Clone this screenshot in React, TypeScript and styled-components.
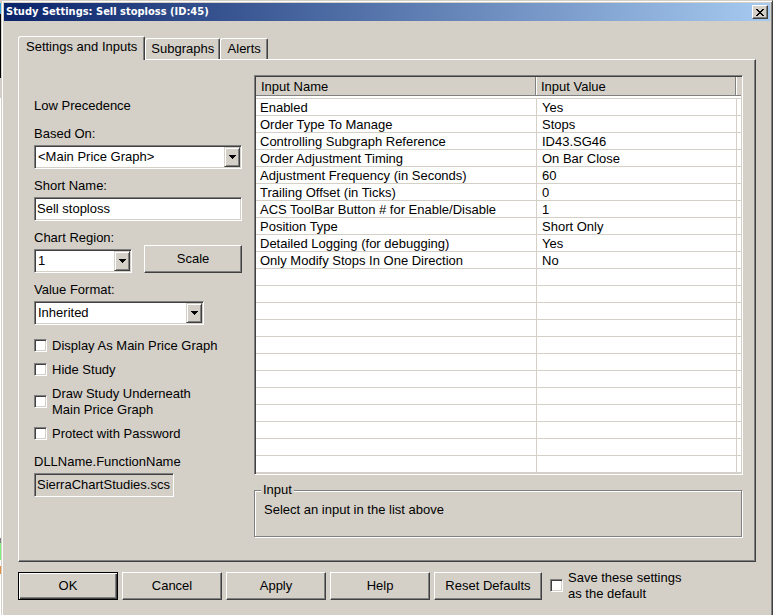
import React, { useId } from "react";
import styled, { createGlobalStyle, css } from "styled-components";

const face = "#d4d0c8";
const shadow = "#808080";
const dark = "#404040";

const GlobalStyle = createGlobalStyle`
  * { box-sizing: border-box; }
  html, body, #root { height: 100%; margin: 0; }
  body { background: #fff; overflow: hidden; }
  body, button, input, select { font: 13px/16px "Liberation Sans", Arial, sans-serif; color: #000; }
`;

const sunken = css`
  border: 1px solid;
  border-color: ${shadow} #fff #fff ${shadow};
  box-shadow: inset 1px 1px ${dark}, inset -1px -1px ${face};
`;

const Desktop = styled.div`
  min-height: 100%;
  display: flex;
  background: linear-gradient(#d4d0c8 0 3px, #2ba3e0 3px 14px, #000 14px 78px, #d4d0c8 78px 98px, #fff 98px 538px, #808080 538px 543px, #7cf47c 543px 560px, #fff 560px 566px, #e09040 566px 574px, #fff 574px);
`;

const Dialog = styled.main`
  flex: 1;
  margin-left: 1px;
  padding: 2px 2px 0;
  background: ${face};
  border: 1px solid;
  border-color: ${face} ${dark} ${face} ${face};
  border-bottom: 0;
  box-shadow: inset 1px 1px #fff, inset -1px 0 ${shadow};
`;

const TitleBar = styled.header`
  height: 18px;
  display: flex;
  align-items: center;
  justify-content: space-between;
  padding: 0 2px;
  background: linear-gradient(90deg, #0a246a, #a6caf0);
`;

const Title = styled.h1`
  margin: 0;
  color: #fff;
  font: bold 11px/16px "DejaVu Sans Condensed", Tahoma, sans-serif;
`;

const CloseButton = styled.button`
  width: 16px;
  height: 14px;
  padding: 0;
  display: grid;
  place-items: center;
  background: ${face};
  border: 1px solid;
  border-color: #fff ${dark} ${dark} #fff;
  box-shadow: inset -1px -1px ${shadow};
`;

const Body = styled.div`
  padding: 15px 14px 12px;
`;

const TabList = styled.div`
  display: flex;
  align-items: flex-end;
  height: 23px;
`;

const Tab = styled.button<{ $active?: boolean }>`
  position: relative;
  z-index: ${(p) => (p.$active ? 1 : 0)};
  height: ${(p) => (p.$active ? 24 : 21)}px;
  min-width: 48px;
  margin-bottom: ${(p) => (p.$active ? -1 : 0)}px;
  padding: ${(p) => (p.$active ? "0 7px 4px" : "0 5px")};
  background: ${face};
  border: 1px solid;
  border-width: 1px 1px 0;
  border-color: #fff ${dark} #fff #fff;
  border-radius: 3px 2px 0 0;
  box-shadow: inset -1px 0 ${shadow};
  white-space: nowrap;
`;

const Panel = styled.section`
  display: flex;
  gap: 12px;
  padding: 15px 12px 24px 15px;
  border: 1px solid;
  border-color: #fff ${dark} ${dark} #fff;
  box-shadow: inset -1px -1px ${shadow};
`;

const Form = styled.div`
  flex: 0 0 208px;
  display: flex;
  flex-direction: column;
  padding-top: 23px;
`;

const Precedence = styled.p`
  margin: 0 0 12px;
`;

const Field = styled.div<{ $width?: number; $last?: boolean }>`
  display: flex;
  flex-direction: column;
  gap: 3px;
  width: ${(p) => (p.$width ? `${p.$width}px` : "100%")};
  margin-bottom: ${(p) => (p.$last ? 0 : 9)}px;
`;

const Row = styled.div`
  display: flex;
  justify-content: space-between;
  align-items: flex-end;
`;

const SelectBox = styled.div`
  ${sunken}
  position: relative;
  height: 24px;
  padding: 1px;
  background: #fff;
`;

const Select = styled.select`
  appearance: none;
  display: block;
  width: 100%;
  height: 20px;
  padding: 0 18px 0 2px;
  border: 0;
  background: transparent;
`;

const Arrow = styled.span`
  position: absolute;
  top: 1px;
  right: 1px;
  bottom: 1px;
  width: 16px;
  display: grid;
  place-items: center;
  pointer-events: none;
  background: ${face};
  border: 1px solid;
  border-color: ${face} ${dark} ${dark} ${face};
  box-shadow: inset 1px 1px #fff, inset -1px -1px ${shadow};
`;

const TextBox = styled.input`
  ${sunken}
  width: 100%;
  height: 24px;
  padding: 0 2px 2px;
  background: ${(p) => (p.readOnly ? face : "#fff")};
`;

const Button = styled.button<{ $default?: boolean; $width: number }>`
  width: ${(p) => p.$width}px;
  height: 28px;
  padding: 0;
  background: ${face};
  border: 1px solid;
  white-space: nowrap;
  ${(p) =>
    p.$default
      ? css`
          border-color: #000;
          box-shadow: inset 1px 1px #fff, inset -1px -1px ${dark}, inset -2px -2px ${shadow};
        `
      : css`
          border-color: #fff ${dark} ${dark} #fff;
          box-shadow: inset -1px -1px ${shadow};
        `}
`;

const Checks = styled.div`
  display: flex;
  flex-direction: column;
  gap: 8px;
  margin: 4px 0 12px;
`;

const CheckLabel = styled.label`
  display: flex;
  align-items: center;
  gap: 5px;
  white-space: pre-line;
`;

const CheckBox = styled.input`
  ${sunken}
  appearance: none;
  flex: none;
  width: 13px;
  height: 13px;
  margin: 0 0 2px;
  background: #fff;
  &:checked { background: radial-gradient(#000 40%, #fff 45%); }
`;

const Details = styled.div`
  flex: 1;
  min-width: 0;
  display: flex;
  flex-direction: column;
  gap: 7px;
`;

const TableFrame = styled.div`
  ${sunken}
  padding: 1px;
`;

const Table = styled.table`
  width: 100%;
  table-layout: fixed;
  border-collapse: separate;
  border-spacing: 0;
  background: #fff;
`;

const NameCol = styled.col``;
const ValueCol = styled.col`width: 200px;`;
const EdgeCol = styled.col`width: 5px;`;

const HeadCell = styled.th`
  height: 19px;
  padding: 2px 5px 0;
  text-align: left;
  font-weight: normal;
  background: ${face};
  border-right: 1px solid ${shadow};
  border-bottom: 1px solid ${shadow};
  box-shadow: inset 1px 0 #fff;
  &:first-child { box-shadow: none; }
  &:last-child { padding: 0; border-right: 0; }
`;

const Spacer = styled.td`
  height: 3px;
  padding: 0;
  border-bottom: 1px solid ${face};
`;

const Cell = styled.td`
  height: 17px;
  padding: 1px 0 0 5px;
  line-height: 15px;
  border-bottom: 1px solid ${face};
  border-left: 1px solid ${face};
  white-space: nowrap;
  overflow: hidden;
  &:first-child { border-left: 0; padding-left: 4px; }
  &:last-child { padding: 0; }
`;

const Group = styled.fieldset`
  min-width: 0;
  min-height: 55px;
  margin: 0 1px 0 0;
  padding: 4px 9px;
  border: 1px solid ${shadow};
  box-shadow: 1px 1px #fff, inset 1px 1px #fff;
`;

const Legend = styled.legend`
  padding: 0 2px;
  margin-left: -3px;
  line-height: 16px;
  background: ${face};
`;

const Hint = styled.p`
  margin: 0;
`;

const Footer = styled.footer`
  display: flex;
  align-items: center;
  gap: 4px;
  padding-top: 8px;
`;

const SaveOption = styled.div`
  margin-left: 4px;
`;

const inputs: [string, string][] = [
  ["Enabled", "Yes"],
  ["Order Type To Manage", "Stops"],
  ["Controlling Subgraph Reference", "ID43.SG46"],
  ["Order Adjustment Timing", "On Bar Close"],
  ["Adjustment Frequency (in Seconds)", "60"],
  ["Trailing Offset (in Ticks)", "0"],
  ["ACS ToolBar Button # for Enable/Disable", "1"],
  ["Position Type", "Short Only"],
  ["Detailed Logging (for debugging)", "Yes"],
  ["Only Modify Stops In One Direction", "No"],
];
const rows = [...inputs, ...Array.from({ length: 12 }, (): [string, string] => ["", ""])];

function Dropdown({ label, value, width }: { label: string; value: string; width?: number }) {
  const id = useId();
  return (
    <Field $width={width}>
      <label htmlFor={id}>{label}</label>
      <SelectBox>
        <Select id={id} defaultValue={value}>
          <option>{value}</option>
        </Select>
        <Arrow>
          <svg width="7" height="4" viewBox="0 0 7 4" shapeRendering="crispEdges">
            <path d="M0 0h7v1H6v1H5v1H4v1H3V3H2V2H1V1H0z" />
          </svg>
        </Arrow>
      </SelectBox>
    </Field>
  );
}

function Check({ label }: { label: string }) {
  return (
    <CheckLabel>
      <CheckBox type="checkbox" />
      {label}
    </CheckLabel>
  );
}

export default function App() {
  return (
    <>
      <GlobalStyle />
      <Desktop>
        <Dialog>
          <TitleBar>
            <Title>Study Settings: Sell stoploss (ID:45)</Title>
            <CloseButton aria-label="Close">
              <svg width="8" height="7" viewBox="0 0 8 7" shapeRendering="crispEdges">
                <path d="M0 0h2v1h1v1h2V1h1V0h2v1H7v1H6v1H5v1h1v1h1v1h1v1H6V6H5V5H3v1H2v1H0V6h1V5h1V4h1V3H2V2H1V1H0z" />
              </svg>
            </CloseButton>
          </TitleBar>
          <Body>
            <TabList role="tablist">
              <Tab role="tab" aria-selected $active>Settings and Inputs</Tab>
              <Tab role="tab">Subgraphs</Tab>
              <Tab role="tab">Alerts</Tab>
            </TabList>
            <Panel>
              <Form>
                <Precedence>Low Precedence</Precedence>
                <Dropdown label="Based On:" value="<Main Price Graph>" />
                <Field>
                  <label htmlFor="short-name">Short Name:</label>
                  <TextBox id="short-name" defaultValue="Sell stoploss" />
                </Field>
                <Row>
                  <Dropdown label="Chart Region:" value="1" width={98} />
                  <Field $width={98}>
                    <Button $width={98}>Scale</Button>
                  </Field>
                </Row>
                <Dropdown label="Value Format:" value="Inherited" width={170} />
                <Checks>
                  <Check label="Display As Main Price Graph" />
                  <Check label="Hide Study" />
                  <Check label={"Draw Study Underneath\nMain Price Graph"} />
                  <Check label="Protect with Password" />
                </Checks>
                <Field $width={140} $last>
                  <label htmlFor="dll-name">DLLName.FunctionName</label>
                  <TextBox id="dll-name" readOnly value="SierraChartStudies.scs" />
                </Field>
              </Form>
              <Details>
                <TableFrame>
                  <Table>
                    <colgroup>
                      <NameCol />
                      <ValueCol />
                      <EdgeCol />
                    </colgroup>
                    <thead>
                      <tr>
                        <HeadCell>Input Name</HeadCell>
                        <HeadCell>Input Value</HeadCell>
                        <HeadCell aria-hidden />
                      </tr>
                    </thead>
                    <tbody>
                      <tr aria-hidden>
                        <Spacer colSpan={3} />
                      </tr>
                      {rows.map(([name, value], i) => (
                        <tr key={i}>
                          <Cell>{name}</Cell>
                          <Cell>{value}</Cell>
                          <Cell />
                        </tr>
                      ))}
                    </tbody>
                  </Table>
                </TableFrame>
                <Group>
                  <Legend>Input</Legend>
                  <Hint>Select an input in the list above</Hint>
                </Group>
              </Details>
            </Panel>
            <Footer>
              <Button $width={100} $default>OK</Button>
              <Button $width={100}>Cancel</Button>
              <Button $width={100}>Apply</Button>
              <Button $width={100}>Help</Button>
              <Button $width={108}>Reset Defaults</Button>
              <SaveOption>
                <Check label={"Save these settings\nas the default"} />
              </SaveOption>
            </Footer>
          </Body>
        </Dialog>
      </Desktop>
    </>
  );
}
